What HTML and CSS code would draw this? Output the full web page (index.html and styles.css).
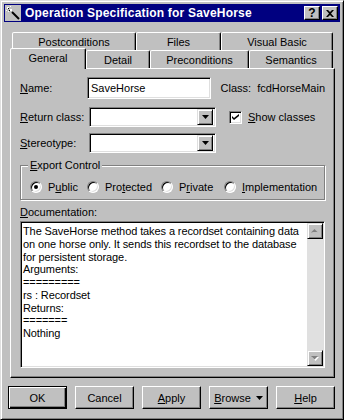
FILE: index.html
```html
<!DOCTYPE html>
<html lang="en">
<head>
    <meta charset="UTF-8">
    <title>Operation Specification for SaveHorse</title>
    <link rel="stylesheet" href="styles.css">
</head>
<body>
    <div class="window">
        <div class="titlebar">
            <svg class="app-icon" width="16" height="16" viewBox="0 0 16 16">
                <rect width="16" height="16" fill="#c0c0c0"/>
                <path d="M2 2h2v2H2zM5 1h1v1H5zM1 5h1v1H1zM5 4h2v2H5zM3 6h1v1H3z" fill="#fff"/>
                <path d="M3 3h1v1H3zM4 5h1v1H4z" fill="#000"/>
                <path d="M7 7l7 7" stroke="#000" stroke-width="2"/>
            </svg>
            <span class="title">Operation Specification for SaveHorse</span>
            <div class="title-buttons">
                <div class="title-btn help-btn">?</div>
                <div class="title-btn">
                    <svg width="8" height="7" viewBox="0 0 8 7"><path d="M0 0h2l2 2 2-2h2L5 3.5 8 7H6L4 5 2 7H0l3-3.5z" fill="#000"/></svg>
                </div>
            </div>
        </div>

        <div class="dialog-body">
            <div class="tabs">
                <div class="tab-row back">
                    <div class="tab" style="width:124px">Postconditions</div>
                    <div class="tab" style="width:85px">Files</div>
                    <div class="tab" style="width:112px">Visual Basic</div>
                </div>
                <div class="tab-row front">
                    <div class="tab active" style="width:76px">General</div>
                    <div class="tab" style="width:64px">Detail</div>
                    <div class="tab" style="width:99px">Preconditions</div>
                    <div class="tab" style="width:84px">Semantics</div>
                </div>
            </div>

            <div class="panel">
                <div class="field-row">
                    <label class="field-label"><u>N</u>ame:</label>
                    <div class="textbox">SaveHorse</div>
                    <div class="class-info">Class:<span class="class-name">fcdHorseMain</span></div>
                </div>
                <div class="field-row row-return">
                    <label class="field-label"><u>R</u>eturn class:</label>
                    <div class="combo">
                        <div class="combo-btn">
                            <svg width="7" height="4" viewBox="0 0 7 4"><path d="M0 0h7L3.5 4z" fill="#000"/></svg>
                        </div>
                    </div>
                    <div class="checkbox-wrap">
                        <div class="checkbox">
                            <svg width="7" height="7" viewBox="0 0 7 7"><path d="M0 2l2 2 5-4v2L2 6 0 4z" fill="#000"/></svg>
                        </div>
                        <span><u>S</u>how classes</span>
                    </div>
                </div>
                <div class="field-row row-stereo">
                    <label class="field-label"><u>S</u>tereotype:</label>
                    <div class="combo">
                        <div class="combo-btn">
                            <svg width="7" height="4" viewBox="0 0 7 4"><path d="M0 0h7L3.5 4z" fill="#000"/></svg>
                        </div>
                    </div>
                </div>

                <fieldset class="group">
                    <legend><u>E</u>xport Control</legend>
                    <div class="radio-row">
                        <div class="radio" style="width:57px"><span class="radio-dot checked"></span><span>P<u>u</u>blic</span></div>
                        <div class="radio" style="width:74px"><span class="radio-dot"></span><span>Pro<u>t</u>ected</span></div>
                        <div class="radio" style="width:63px"><span class="radio-dot"></span><span>P<u>r</u>ivate</span></div>
                        <div class="radio"><span class="radio-dot"></span><span><u>I</u>mplementation</span></div>
                    </div>
                </fieldset>

                <div class="doc-label"><u>D</u>ocumentation:</div>
                <div class="doc">
                    <div class="doc-text">The SaveHorse method takes a recordset containing data
on one horse only. It sends this recordset to the database
for persistent storage.
Arguments:
=========
rs : Recordset
Returns:
=======
Nothing</div>
                    <div class="scrollbar">
                        <div class="sb-btn">
                            <svg width="8" height="5" viewBox="0 0 8 5"><path d="M4 1l3 3H1z" fill="#fff"/><path d="M3.5 0L7 3.5H0z" fill="#808080"/></svg>
                        </div>
                        <div class="sb-btn">
                            <svg width="8" height="5" viewBox="0 0 8 5"><path d="M1 1h7L4.5 5z" fill="#fff"/><path d="M0 0h7L3.5 3.5z" fill="#808080"/></svg>
                        </div>
                    </div>
                </div>
            </div>

            <div class="buttons">
                <div class="btn default">OK</div>
                <div class="btn">Cancel</div>
                <div class="btn"><span><u>A</u>pply</span></div>
                <div class="btn"><span><u>B</u>rowse</span>
                    <svg class="browse-arrow" width="7" height="4" viewBox="0 0 7 4"><path d="M0 0h7L3.5 4z" fill="#000"/></svg>
                </div>
                <div class="btn"><span><u>H</u>elp</span></div>
            </div>
        </div>
    </div>
</body>
</html>
```

FILE: styles.css
```css
* {
    margin: 0;
    padding: 0;
    box-sizing: border-box;
}

body {
    margin: 0;
    background: #c0c0c0;
    font-family: "Liberation Sans", Arial, sans-serif;
    font-size: 11px;
    color: #000;
}

u {
    text-decoration: underline;
    text-underline-offset: 1px;
}

.window {
    width: 344px;
    height: 420px;
    background: #c0c0c0;
    border: 1px solid;
    border-color: #dfdfdf #000 #000 #dfdfdf;
    box-shadow: inset 1px 1px #fff, inset -1px -1px #808080;
    padding: 3px;
    display: flex;
    flex-direction: column;
}

/* title bar */
.titlebar {
    height: 18px;
    background: #000080;
    color: #fff;
    display: flex;
    align-items: center;
    padding: 0 2px 0 1px;
}

.app-icon {
    flex-shrink: 0;
}

.title {
    flex: 1;
    margin-left: 4px;
    font-weight: bold;
    font-size: 12px;
    letter-spacing: 0.2px;
    white-space: nowrap;
}

.title-buttons {
    display: flex;
    gap: 2px;
}

.title-btn {
    width: 16px;
    height: 14px;
    background: #c0c0c0;
    border: 1px solid;
    border-color: #fff #000 #000 #fff;
    box-shadow: inset -1px -1px #808080;
    display: flex;
    align-items: center;
    justify-content: center;
    color: #000;
}

.help-btn {
    font-weight: bold;
    font-size: 12px;
    line-height: 1;
}

/* body */
.dialog-body {
    flex: 1;
    padding: 10px 5px 0 6px;
    display: flex;
    flex-direction: column;
}

.tabs {
    display: flex;
    flex-direction: column;
}

.tab-row {
    display: flex;
    height: 18px;
}

.tab-row.back {
    margin-left: 2px;
}

.tab {
    height: 18px;
    background: #c0c0c0;
    border: 1px solid;
    border-bottom: none;
    border-color: #fff #000 transparent #fff;
    border-radius: 2px 2px 0 0;
    box-shadow: inset -1px 0 #808080;
    display: flex;
    align-items: center;
    justify-content: center;
    white-space: nowrap;
}

.tab.active {
    position: relative;
    z-index: 1;
    height: 21px;
    margin-top: -2px;
    padding-bottom: 2px;
}

.panel {
    height: 310px;
    border: 1px solid;
    border-color: #fff #000 #000 #fff;
    box-shadow: inset -1px -1px #808080;
    padding: 8px 9px 0 9px;
}

/* fields */
.field-row {
    display: flex;
    align-items: center;
}

.row-return {
    margin-top: 8px;
}

.row-stereo {
    margin-top: 6px;
}

.field-label {
    width: 69px;
    white-space: nowrap;
}

.textbox,
.combo {
    width: 127px;
    background: #fff;
    border: 1px solid;
    border-color: #808080 #fff #fff #808080;
    box-shadow: inset 1px 1px #000, inset -1px -1px #dfdfdf;
}

.textbox {
    height: 22px;
    padding: 0 3px;
    display: flex;
    align-items: center;
}

.class-info {
    margin-left: 10px;
    white-space: nowrap;
}

.class-name {
    margin-left: 6px;
}

.combo {
    height: 20px;
    padding: 1px 1px 1px 0;
    display: flex;
    justify-content: flex-end;
    align-items: center;
}

.combo-btn {
    width: 16px;
    height: 16px;
    margin-right: 1px;
    background: #c0c0c0;
    border: 1px solid;
    border-color: #dfdfdf #000 #000 #dfdfdf;
    box-shadow: inset 1px 1px #fff, inset -1px -1px #808080;
    display: flex;
    align-items: center;
    justify-content: center;
}

.checkbox-wrap {
    margin-left: 13px;
    display: flex;
    align-items: center;
    gap: 6px;
}

.checkbox {
    width: 13px;
    height: 13px;
    background: #fff;
    border: 1px solid;
    border-color: #808080 #fff #fff #808080;
    box-shadow: inset 1px 1px #000, inset -1px -1px #dfdfdf;
    display: flex;
    align-items: center;
    justify-content: center;
}

/* export control */
.group {
    margin-top: 6px;
    width: 305px;
    border: 1px solid #808080;
    box-shadow: inset 1px 1px #fff, 1px 1px #fff;
    padding: 8px 0 6px 9px;
}

.group legend {
    margin-left: -2px;
    padding: 0 2px;
    line-height: 13px;
    background: #c0c0c0;
}

.radio-row {
    display: flex;
    height: 13px;
    align-items: center;
}

.radio {
    display: flex;
    align-items: center;
    gap: 6px;
    white-space: nowrap;
}

.radio-dot {
    flex-shrink: 0;
    width: 12px;
    height: 12px;
    border-radius: 50%;
    background: #fff;
    border: 1px solid;
    border-color: #808080 #fff #fff #808080;
    box-shadow: inset 1px 1px #000, inset -1px -1px #dfdfdf;
    display: flex;
    align-items: center;
    justify-content: center;
}

.radio-dot.checked::after {
    content: "";
    width: 4px;
    height: 4px;
    border-radius: 50%;
    background: #000;
}

/* documentation */
.doc-label {
    margin-top: 6px;
    line-height: 13px;
}

.doc {
    margin-top: 2px;
    width: 305px;
    height: 147px;
    background: #fff;
    border: 1px solid;
    border-color: #808080 #fff #fff #808080;
    box-shadow: inset 1px 1px #000, inset -1px -1px #dfdfdf;
    padding: 1px;
    display: flex;
}

.doc-text {
    flex: 1;
    padding: 2px 1px;
    line-height: 12.75px;
    letter-spacing: -0.1px;
    white-space: pre;
    overflow: hidden;
}

.scrollbar {
    width: 16px;
    background: #e0e0e0;
    display: flex;
    flex-direction: column;
    justify-content: space-between;
}

.sb-btn {
    height: 16px;
    background: #c0c0c0;
    border: 1px solid;
    border-color: #dfdfdf #000 #000 #dfdfdf;
    box-shadow: inset 1px 1px #fff, inset -1px -1px #808080;
    display: flex;
    align-items: center;
    justify-content: center;
}

/* buttons */
.buttons {
    display: flex;
    gap: 8px;
    margin-top: 8px;
    margin-left: -2px;
}

.btn {
    width: 59px;
    height: 23px;
    background: #c0c0c0;
    border: 1px solid;
    border-color: #fff #000 #000 #fff;
    box-shadow: inset -1px -1px #808080;
    display: flex;
    align-items: center;
    justify-content: center;
    white-space: nowrap;
}

.btn.default {
    border-color: #000;
    box-shadow: inset 1px 1px #fff, inset -1px -1px #000, inset -2px -2px #808080;
}

.browse-arrow {
    margin-left: 5px;
}
```
